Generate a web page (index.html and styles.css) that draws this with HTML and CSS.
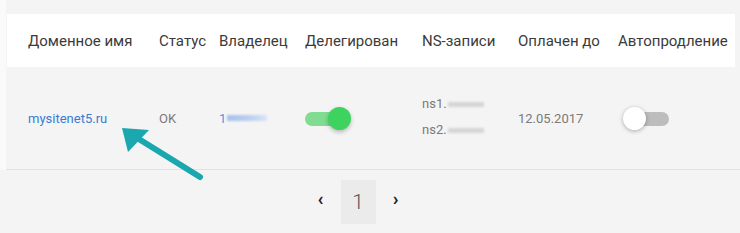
FILE: index.html
```html
<!DOCTYPE html>
<html lang="ru">
<head>
<meta charset="utf-8">
<link rel="stylesheet" href="styles.css">
</head>
<body>
<div class="page">
  <div class="table">
    <div class="head grid">
      <div>Доменное имя</div>
      <div>Статус</div>
      <div>Владелец</div>
      <div>Делегирован</div>
      <div>NS-записи</div>
      <div>Оплачен до</div>
      <div>Автопродление</div>
    </div>
    <div class="row grid">
      <div><a class="link" href="#">mysitenet5.ru</a></div>
      <div class="muted">OK</div>
      <div class="owner">1<span class="blur-blue"></span></div>
      <div><span class="toggle on"><span class="knob"></span></span></div>
      <div class="ns">
        <div>ns1.<span class="blur-gray"></span></div>
        <div>ns2.<span class="blur-gray"></span></div>
      </div>
      <div class="muted">12.05.2017</div>
      <div><span class="toggle off"><span class="knob"></span></span></div>
    </div>
  </div>
  <div class="pager">
    <span class="nav">&#8249;</span>
    <span class="current">1</span>
    <span class="nav">&#8250;</span>
  </div>
  <svg class="arrow" width="110" height="70" viewBox="0 0 110 70">
    <line x1="90" y1="59" x2="24" y2="18" stroke="#1aa8ae" stroke-width="6" stroke-linecap="round"/>
    <polygon points="12,10 39,12 18,34" fill="#1aa8ae"/>
  </svg>
</div>
</body>
</html>
```
FILE: styles.css
```css
html, body {
  margin: 0;
  padding: 0;
}
body {
  background: #f4f4f4;
  font-family: Roboto, "Noto Sans", sans-serif;
  width: 740px;
  height: 233px;
  overflow: hidden;
}
.page {
  position: relative;
  height: 233px;
}
.table {
  padding-top: 14px;
  border-left: 6px solid #fafafa;
}
.grid {
  display: grid;
  grid-template-columns: 131px 60px 86px 117px 96px 100px 1fr;
  align-items: center;
}
.head {
  background: #fff;
  height: 53px;
  margin-right: 5px;
  margin-left: 1px;
  font-size: 15px;
  color: #3b3b3b;
  padding-left: 21px;
}
.row {
  height: 103px;
  border-bottom: 1px solid #e2e2e2;
  font-size: 13px;
  color: #7a7a7a;
  padding-left: 22px;
  box-sizing: border-box;
}
.link {
  color: #3a7bd5;
  text-decoration: none;
}
.muted {
  color: #7a7a7a;
}
.owner {
  color: #5b8fe0;
  display: flex;
  align-items: center;
}
.blur-blue {
  display: inline-block;
  width: 40px;
  height: 6px;
  margin-left: 1px;
  background: linear-gradient(90deg, #a8c2ec, #bcd0f0 60%, #dbe5f6);
  filter: blur(1.2px);
}
.blur-gray {
  display: inline-block;
  width: 36px;
  height: 5px;
  margin-left: 1px;
  background: #d6d6d6;
  filter: blur(1.2px);
  vertical-align: middle;
}
.ns {
  display: flex;
  flex-direction: column;
  gap: 11px;
  color: #7a7a7a;
  margin-top: -3px;
}
.toggle {
  position: relative;
  display: inline-block;
  width: 40px;
  height: 14px;
  border-radius: 7px;
  vertical-align: middle;
}
.toggle .knob {
  position: absolute;
  top: -5px;
  width: 23px;
  height: 23px;
  border-radius: 50%;
}
.toggle.on {
  background: #7fdc91;
}
.toggle.on .knob {
  right: -6px;
  background: #3ed35f;
  box-shadow: 0 2px 4px rgba(0,0,0,0.25);
}
.toggle.off {
  background: #bdbdbd;
  width: 36px;
  margin-left: 15px;
}
.toggle.off .knob {
  left: -10px;
  background: #fff;
  box-shadow: 0 1px 4px rgba(0,0,0,0.3);
}
.pager {
  display: flex;
  justify-content: center;
  align-items: center;
  padding-top: 10px;
  padding-right: 24px;
}
.nav {
  font-size: 19px;
  font-weight: 700;
  color: #222;
  width: 40px;
  text-align: center;
  line-height: 44px;
  margin-top: -6px;
}
.current {
  width: 35px;
  height: 44px;
  line-height: 44px;
  text-align: center;
  background: #ebebeb;
  font-size: 21px;
  font-weight: 300;
  color: #555;
}
.arrow {
  position: absolute;
  left: 110px;
  top: 118px;
}
```
